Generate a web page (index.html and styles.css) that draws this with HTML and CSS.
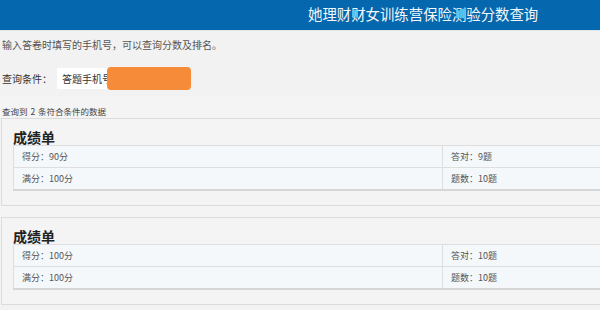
FILE: index.html
```html
<!DOCTYPE html>
<html lang="zh-CN">
<head>
    <meta charset="UTF-8">
    <meta name="viewport" content="width=device-width, initial-scale=1.0">
    <title>分数查询</title>
    <link rel="stylesheet" href="styles.css">
</head>
<body>
    <header class="top-bar">
        <h1>她理财财女训练营保险测验分数查询</h1>
    </header>

    <p class="intro">输入答卷时填写的手机号，可以查询分数及排名。</p>

    <div class="query-row">
        <label for="phone">查询条件：</label>
        <div class="input-wrap">
            <input type="text" id="phone" value="答题手机号">
            <!-- redacted number -->
            <span class="mask"></span>
        </div>
    </div>

    <div class="results">
        <p class="count">查询到 2 条符合条件的数据</p>

        <div class="card">
            <h2>成绩单</h2>
            <table>
                <tr>
                    <td class="col-a">得分：90分</td>
                    <td>答对：9题</td>
                </tr>
                <tr>
                    <td class="col-a">满分：100分</td>
                    <td>题数：10题</td>
                </tr>
            </table>
        </div>

        <div class="card">
            <h2>成绩单</h2>
            <table>
                <tr>
                    <td class="col-a">得分：100分</td>
                    <td>答对：10题</td>
                </tr>
                <tr>
                    <td class="col-a">满分：100分</td>
                    <td>题数：10题</td>
                </tr>
            </table>
        </div>
    </div>
</body>
</html>
```

FILE: styles.css
```css
body {
    margin: 0;
    font-family: "Noto Sans CJK SC", "Noto Sans", sans-serif;
    background-color: #f2f2f2;
    color: #333;
}
.top-bar {
    height: 30px;
    background-color: #0567ad;
    border-bottom: 1px solid #e2e6ea;
}
.top-bar h1 {
    margin: 0;
    padding-left: 308px;
    font-size: 14.4px;
    font-weight: normal;
    line-height: 27px;
    color: #f4f8fc;
    white-space: nowrap;
}
.intro {
    margin: 7px 0 0 2px;
    font-size: 10px;
    line-height: 14px;
    color: #555;
}
.query-row {
    display: flex;
    align-items: center;
    margin: 16px 0 0 2px;
    font-size: 10px;
}
.query-row label {
    width: 55px;
    color: #333;
}
.input-wrap {
    position: relative;
}
.query-row input {
    width: 133px;
    height: 21px;
    box-sizing: border-box;
    padding: 0 5px;
    border: none;
    background: #fff;
    font-family: inherit;
    font-size: 10px;
    color: #333;
}
.mask {
    position: absolute;
    left: 50px;
    top: -1px;
    width: 84px;
    height: 23px;
    border-radius: 4px;
    background-color: #f68b3a;
}
.results {
    margin-top: 7px;
    padding: 10px 0 0 1px;
    background-color: #f4f4f4;
}
.count {
    margin: 0 0 0 1px;
    font-size: 8.5px;
    line-height: 10px;
    word-spacing: 1px;
    color: #444;
}
.card {
    margin: 2px 0 11px;
    padding: 10px 0 14px 11px;
    border: 1px solid #dcdcdc;
    border-right: none;
    background-color: #f4f4f4;
}
.card h2 {
    margin: 0;
    font-size: 14px;
    line-height: 16px;
    color: #222;
}
.card table {
    width: 100%;
    border-collapse: collapse;
    background-color: #f4f8fb;
    border-top: 1px solid #dedede;
    border-bottom: 2px solid #d6d6d6;
    border-left: 1px solid #dedede;
}
.card td {
    height: 21px;
    padding: 0 0 0 8px;
    font-size: 9px;
    color: #555;
    border-bottom: 1px solid #dedede;
}
.card tr:last-child td {
    border-bottom: none;
}
.card td.col-a {
    width: 420px;
    border-right: 1px solid #dedede;
}
```
